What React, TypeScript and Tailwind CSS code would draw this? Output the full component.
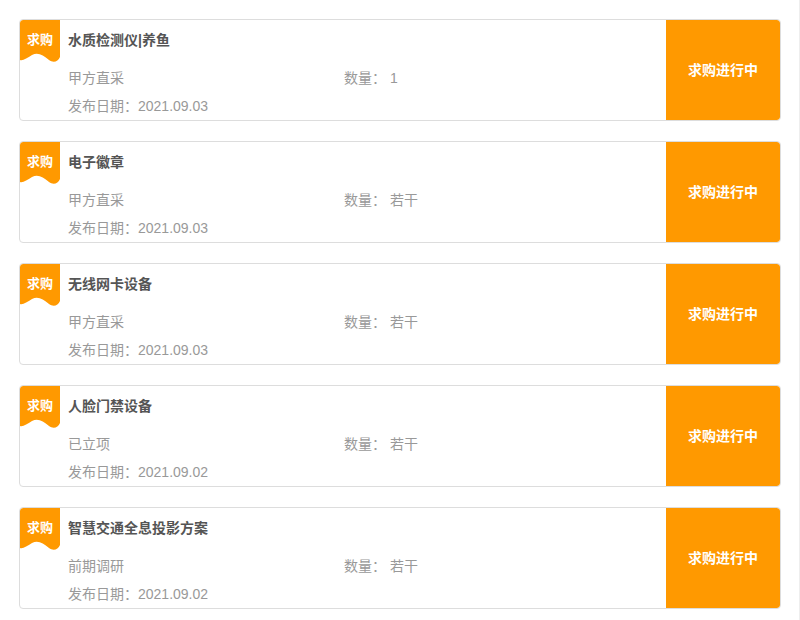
const items = [
  { title: '水质检测仪|养鱼', way: '甲方直采', qty: '1', date: '2021.09.03' },
  { title: '电子徽章', way: '甲方直采', qty: '若干', date: '2021.09.03' },
  { title: '无线网卡设备', way: '甲方直采', qty: '若干', date: '2021.09.03' },
  { title: '人脸门禁设备', way: '已立项', qty: '若干', date: '2021.09.02' },
  { title: '智慧交通全息投影方案', way: '前期调研', qty: '若干', date: '2021.09.02' },
];

function Badge() {
  return (
    <div className="relative w-[40px] h-[44px] shrink-0">
      <svg className="absolute inset-0" width="40" height="44" viewBox="0 0 40 44">
        <path
          d="M0 3 Q0 0 3 0 H40 V37 C38 42 33 43 29 40 C23 35 18 32 12 35 C7 38 3 41 0 40 Z"
          fill="#ff9900"
        />
      </svg>
      <span className="absolute left-0 right-0 top-[12px] text-center text-[13px] leading-[16px] font-bold text-white">
        求购
      </span>
    </div>
  );
}

export default function App() {
  return (
    <div
      className="w-[800px] min-h-[620px] bg-white border-r border-[#eeeeee] pt-[19px] px-[19px] flex flex-col gap-[20px]"
      style={{ fontFamily: '"Liberation Sans", "Noto Sans CJK SC", sans-serif' }}
    >
      {items.map((item) => (
        <div
          key={item.title}
          className="w-[762px] h-[102px] border border-[#dddddd] rounded-[4px] flex overflow-hidden"
        >
          <Badge />
          <div className="flex-1 pl-[8px] pt-[10px]">
            <div className="text-[14px] leading-[20px] font-bold text-[#555555]">{item.title}</div>
            <div className="mt-[18px] flex text-[14px] leading-[20px] text-[#999999]">
              <div className="w-[276px]">{item.way}</div>
              <div>数量： {item.qty}</div>
            </div>
            <div className="mt-[8px] text-[14px] leading-[20px] text-[#999999]">
              发布日期：{item.date}
            </div>
          </div>
          <div className="w-[114px] bg-[#ff9900] rounded-r-[3px] flex items-center justify-center text-[14px] font-bold text-white">
            求购进行中
          </div>
        </div>
      ))}
    </div>
  );
}
